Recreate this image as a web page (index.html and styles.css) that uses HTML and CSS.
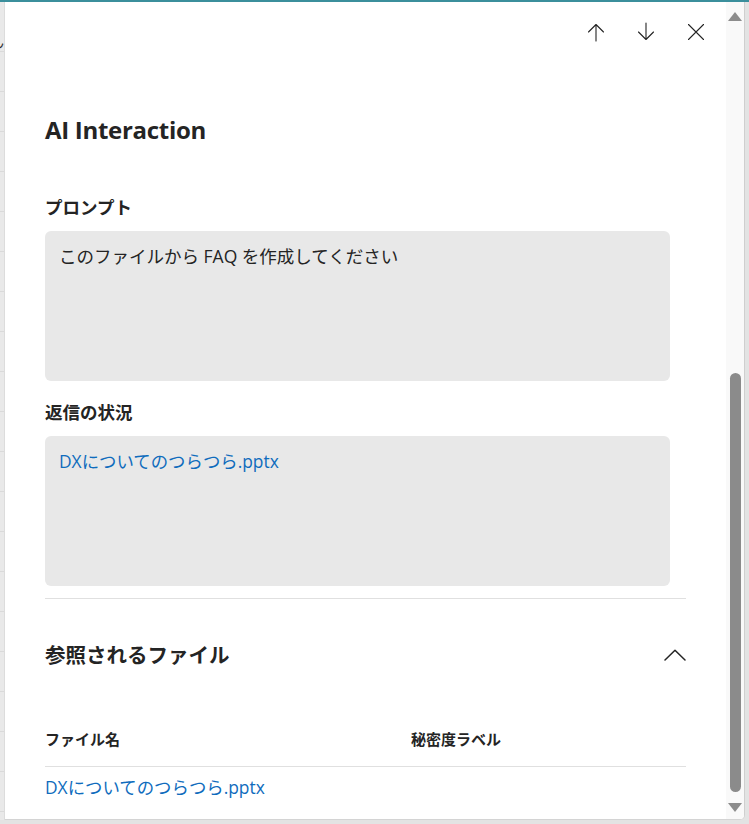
FILE: index.html
```html
<!DOCTYPE html>
<html lang="ja">
<head>
<meta charset="utf-8">
<title>AI Interaction</title>
<link rel="stylesheet" href="styles.css">
</head>
<body>
<div class="screen">
  <div class="app-edge"><span class="edge-glyph">ん</span></div>
  <div class="panel">
    <div class="panel-body">
      <div class="toolbar">
        <button class="icon-btn" aria-label="前へ">
          <svg width="20" height="20" viewBox="0 0 20 20"><path d="M10 2.5V19M10 2.5L2.5 10M10 2.5L17.5 10" fill="none" stroke="#242424" stroke-width="1.1" stroke-linecap="round" stroke-linejoin="round"/></svg>
        </button>
        <button class="icon-btn" aria-label="次へ">
          <svg width="20" height="20" viewBox="0 0 20 20"><path d="M10 1V17.5M10 17.5L2.5 10M10 17.5L17.5 10" fill="none" stroke="#242424" stroke-width="1.1" stroke-linecap="round" stroke-linejoin="round"/></svg>
        </button>
        <button class="icon-btn" aria-label="閉じる">
          <svg width="20" height="20" viewBox="0 0 20 20"><path d="M2.5 2.5L17.5 17.5M17.5 2.5L2.5 17.5" fill="none" stroke="#242424" stroke-width="1.1" stroke-linecap="round"/></svg>
        </button>
      </div>

      <h1 class="title">AI Interaction</h1>

      <section class="field">
        <h2 class="field-label">プロンプト</h2>
        <div class="field-box">このファイルから FAQ を作成してください</div>
      </section>

      <section class="field">
        <h2 class="field-label">返信の状況</h2>
        <div class="field-box"><a class="file-link" href="#">DXについてのつらつら.pptx</a></div>
      </section>

      <hr class="divider">

      <div class="section-head">
        <h2 class="section-title">参照されるファイル</h2>
        <button class="chevron-btn" aria-label="折りたたむ">
          <svg width="22" height="12" viewBox="0 0 22 12"><path d="M1 11L11 1.2L21 11" fill="none" stroke="#242424" stroke-width="1.5" stroke-linecap="round" stroke-linejoin="round"/></svg>
        </button>
      </div>

      <table class="files">
        <thead>
          <tr><th class="col-name">ファイル名</th><th class="col-label">秘密度ラベル</th></tr>
        </thead>
        <tbody>
          <tr><td><a class="file-link" href="#">DXについてのつらつら.pptx</a></td><td></td></tr>
        </tbody>
      </table>
    </div>

    <div class="scrollbar">
      <span class="sb-arrow sb-up"></span>
      <div class="sb-track"><div class="sb-thumb"></div></div>
      <span class="sb-arrow sb-down"></span>
    </div>
  </div>
</div>
</body>
</html>
```

FILE: styles.css
```css
* { box-sizing: border-box; }

html, body {
  margin: 0;
  height: 100%;
}

body {
  background: #e3e3e3;
  font-family: "Open Sans", "Noto Sans CJK JP", sans-serif;
  color: #242424;
  overflow: hidden;
}

.screen {
  display: flex;
  height: 820px;
  border-top: 2px solid #3b8f9c;
}

/* sliver of the list page behind the dialog */
.app-edge {
  width: 5px;
  flex: none;
  overflow: hidden;
  background:
    repeating-linear-gradient(to bottom, transparent 0, transparent 39px, #dadada 39px, #dadada 40px) 0 10px / 100% 100%,
    #e9e9e9;
  border-right: 1px solid #dcdcdc;
}

.edge-glyph {
  display: block;
  margin: 32px 0 0 -10px;
  font-size: 14px;
  line-height: 16px;
  color: #333;
}

.panel {
  width: 740px;
  flex: none;
  display: flex;
  background: #fff;
  border-right: 1px solid #cfcfcf;
  border-bottom: 1px solid #d4d4d4;
  border-bottom-right-radius: 5px;
  overflow: hidden;
}

.panel-body {
  flex: 1;
  min-width: 0;
  padding: 0 40px 0 40px;
}

.toolbar {
  display: flex;
  justify-content: flex-end;
  align-items: center;
  gap: 10px;
  height: 60px;
  margin-right: -30px;
}

.icon-btn,
.chevron-btn {
  display: flex;
  align-items: center;
  justify-content: center;
  border: 0;
  background: none;
  padding: 0;
  cursor: pointer;
}

.icon-btn {
  width: 40px;
  height: 40px;
}

.title {
  margin: 52px 0 0;
  font-size: 24px;
  line-height: 32px;
  font-weight: 700;
  letter-spacing: -0.3px;
}

.field {
  margin-top: 49px;
}

.field + .field {
  margin-top: 19px;
}

.field-label {
  margin: 0 0 12px;
  font-size: 17.5px;
  line-height: 24px;
  font-weight: 700;
}

.field-box {
  width: 625px;
  height: 150px;
  padding: 12px 14px;
  background: #e8e8e8;
  border-radius: 6px;
  font-size: 17.5px;
  line-height: 26px;
}

.file-link {
  color: #0f6cbd;
  text-decoration: none;
  font-size: 17.4px;
}

.divider {
  margin: 12px 0 0;
  border: 0;
  border-top: 1px solid #e0e0e0;
}

.section-head {
  display: flex;
  align-items: center;
  justify-content: space-between;
  margin-top: 42px;
}

.section-title {
  margin: 0;
  font-size: 20.5px;
  line-height: 28px;
  font-weight: 600;
}

.chevron-btn {
  width: 22px;
  height: 28px;
}

.files {
  width: 100%;
  margin-top: 60px;
  border-collapse: collapse;
}

.files th {
  text-align: left;
  font-size: 15px;
  font-weight: 700;
  line-height: 20px;
  padding: 0 0 17px;
  border-bottom: 1px solid #e0e0e0;
}

.files .col-name {
  width: 366px;
}

.files td {
  padding: 8px 0;
  line-height: 24px;
}

/* classic scrollbar of the dialog body */
.scrollbar {
  width: 18px;
  flex: none;
  display: flex;
  flex-direction: column;
  align-items: center;
  padding: 6px 0 3px;
  background: #f9f9f9;
}

.sb-arrow {
  flex: none;
  width: 17px;
  height: 17px;
  display: flex;
  align-items: center;
  justify-content: center;
}

.sb-arrow::before {
  content: "";
  border-left: 7px solid transparent;
  border-right: 7px solid transparent;
}

.sb-up::before { border-bottom: 9px solid #8c8c8c; }
.sb-down::before { border-top: 9px solid #8c8c8c; }

.sb-track {
  flex: 1;
  width: 100%;
  display: flex;
  flex-direction: column;
  justify-content: flex-end;
  align-items: center;
  padding-bottom: 7px;
}

.sb-thumb {
  width: 11px;
  height: 419px;
  background: #8b8b8b;
  border-radius: 6px;
}
```
